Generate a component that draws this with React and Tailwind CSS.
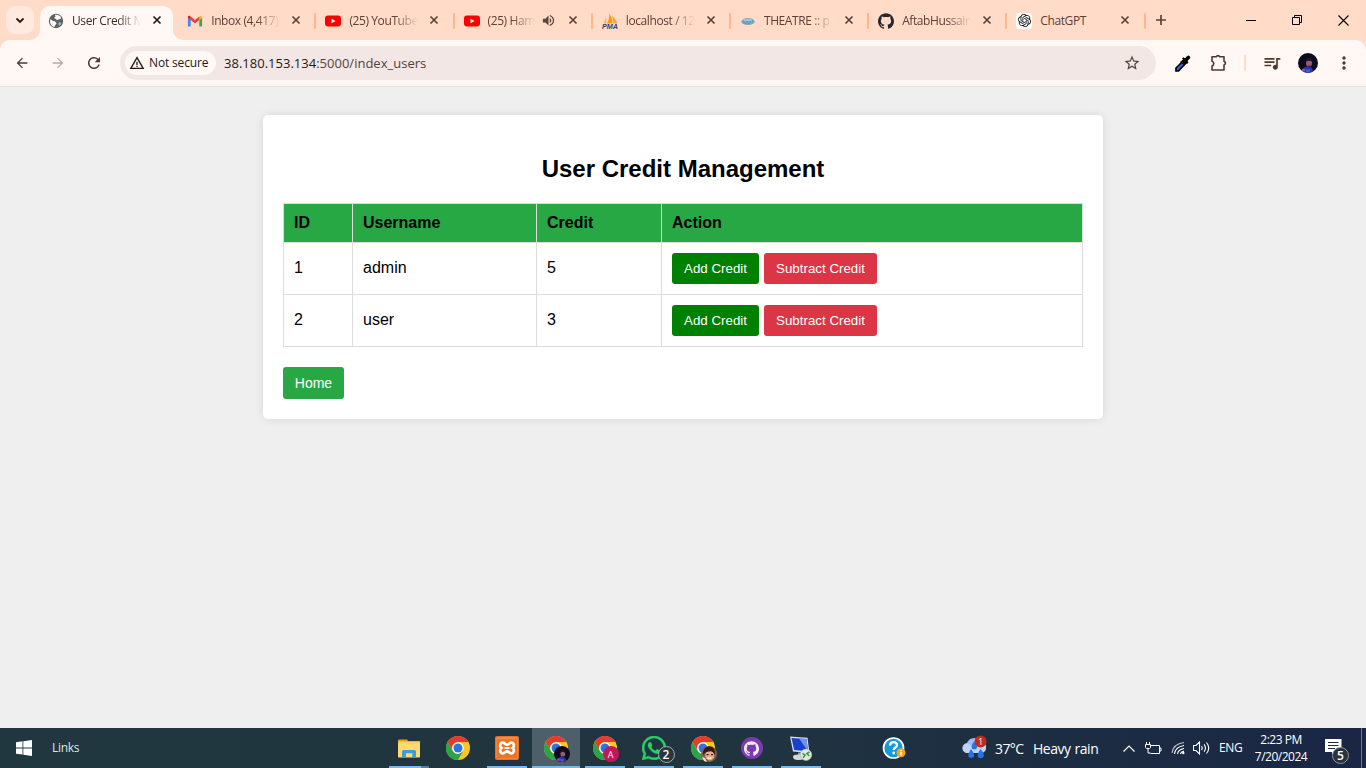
import React from "react";
import {
  MdArrowBack, MdArrowForward, MdRefresh, MdStarBorder, MdMoreVert,
  MdQueueMusic, MdVolumeUp, MdWarningAmber,
} from "react-icons/md";
import { SiGithub, SiOpenai, SiWhatsapp } from "react-icons/si";

const Globe = () => (
  <svg width="16" height="16" viewBox="0 0 16 16">
    <circle cx="8" cy="8" r="7.200" fill="#5b6266" />
    <path d="M2.200 6.200c1.600.6 2.300 1.800 3.900 1.900 1.100.1 1 1.200 1.900 1.300.9.2.4 1.800-.5 2.400-.8.5-.4 1.800-1.400 2.200C3.700 13.200 2 11 2 8.200z" fill="#fff8f5" />
    <path d="M7.200 1.800c2.200-.3 4.200.5 5.400 2 .8 1 .5 2-.6 2.200-1.300.2-1.600 1-3 .9-1.200-.1-1-1-2-1.300-1.300-.5-1-1.400.2-1.700.9-.2-.7-1.500 0-2.100z" fill="#fff8f5" />
    <path d="M11 9.500c1.200-.5 2.200-.2 2.400.6-.3 1.300-1.200 2.300-2.200 2.800-.7-.8-1.400-2.700-.2-3.400z" fill="#fff8f5" opacity=".5" />
  </svg>
);

const Gmail = () => (
  <svg width="16" height="16" viewBox="0 0 16 16">
    <path d="M1 13.500h2.700V7L.9 4.800v7.700c0 .6.000 1 .1 1z" fill="#4285f4" />
    <path d="M12.300 13.500H15c.1 0 .1-.4.1-1V4.800L12.300 7z" fill="#34a853" />
    <path d="M12.300 3.800V7l2.800-2.200c.1-2-1.200-2.500-2.300-1.600z" fill="#fbbc04" />
    <path d="M3.700 7V3.600L8 6.900l4.300-3.300V7L8 10.400z" fill="#ea4335" />
    <path d="M.9 4.800L3.700 7V3.600l-.5-.4C2.100 2.300.8 3 .9 4.800z" fill="#c5221f" />
  </svg>
);

const YouTube = () => (
  <svg width="16" height="16" viewBox="0 0 16 16">
    <rect x="0" y="2.400" width="16" height="11.200" rx="3" fill="#f00" />
    <path d="M6.500 5.700v4.600l4-2.300z" fill="#fff" />
  </svg>
);

const Pma = () => (
  <svg width="16" height="16" viewBox="0 0 16 16">
    <path d="M1.500 10.500C3 8.500 3.500 5.500 3.800 3.500c.6 2 .9 5 .4 7z" fill="#fbb25c" />
    <path d="M5 10.500c1.800-3 2.200-6.500 2.400-10 2 3 3.500 7 3 10z" fill="#f89c0e" />
    <path d="M11 10.500c.2-2.800-.3-5.500-1-8 2.400 2 4.500 5 5.500 8z" fill="#f9a63a" />
    <text x="0" y="15.600" fontSize="6.500" fontWeight="bold" fontStyle="italic" fontFamily="Liberation Sans, sans-serif" fill="#333c78" textLength="16" lengthAdjust="spacingAndGlyphs">PMA</text>
  </svg>
);

const Oval = () => (
  <svg width="16" height="16" viewBox="0 0 16 16">
    <ellipse cx="8" cy="8.500" rx="6.700" ry="3.600" fill="#7badc1" />
    <ellipse cx="7.500" cy="7" rx="4.500" ry="1.300" fill="#a4c4cf" />
    <path d="M3 8.800h10M4.500 10.600h6" stroke="#568da6" strokeWidth=".9" strokeDasharray="2 1" />
  </svg>
);

const Gpt = () => (
  <span className="flex size-4 items-center justify-center rounded-[3px] bg-white">
    <SiOpenai size={13} color="#111" />
  </span>
);

const CloseIcon = ({ color }) => (
  <svg className="ml-[9px] shrink-0" width="14" height="14" viewBox="0 0 14 14">
    <path d="M3.500 3.500l7 7M10.500 3.500l-7 7" stroke={color} strokeWidth="1.700" />
  </svg>
);

const Xampp = () => (
  <svg width="24" height="24" viewBox="0 0 24 24">
    <rect width="24" height="24" rx="2" fill="#e8702a" />
    <rect x="1.200" y="1" width="21.600" height="22" rx="1.500" fill="#f58a45" />
    <rect x="2" y="3.200" width="20" height="19" rx="1" fill="#ee7423" />
    <path d="M7.800 6.700c2 0 2.300 2 4.200 2s2.200-2 4.200-2c2.800 0 3.600 3.700 1.300 5.300 2.300 1.600 1.500 5.300-1.300 5.300-2 0-2.300-2-4.200-2s-2.200 2-4.200 2c-2.800 0-3.600-3.700-1.300-5.300-2.300-1.600-1.500-5.300 1.300-5.300z" fill="none" stroke="#fff" strokeWidth="2.700" />
    <path d="M9.500 12h5" stroke="#fff" strokeWidth="2" />
  </svg>
);

const Chrome = () => (
  <svg width="24" height="24" viewBox="0 0 24 24">
    <circle cx="12" cy="12" r="12" fill="#fcc624" />
    <path d="M1.600 6A12 12 0 0 1 22.400 6H12a6 6 0 0 0-5.300 8.600z" fill="#e33b2e" />
    <path d="M1.600 6l5.200 9A6 6 0 0 0 12 18l5.200-3L12 24A12 12 0 0 1 1.600 6z" fill="#2ba24c" />
    <circle cx="12" cy="12" r="5.800" fill="#fff" />
    <circle cx="12" cy="12" r="4.500" fill="#2a74e8" />
  </svg>
);

const Avatar = ({ size }) => (
  <svg width={size} height={size} viewBox="0 0 20 20">
    <defs><clipPath id={"av" + size}><circle cx="10" cy="10" r="10" /></clipPath></defs>
    <g clipPath={"url(#av" + size + ")"}>
      <rect width="20" height="20" fill="#0d0c1d" />
      <path d="M4.500 20c0-4.500 1.500-6.500 5-6.500 4 0 5.500 2 6 6.500z" fill="#2533ad" />
      <path d="M7.500 15.500c1 1.500 4 1.500 5 0l-1 4h-3z" fill="#5e55ce" />
      <ellipse cx="11" cy="10" rx="3" ry="3.800" fill="#9b5873" />
      <path d="M7.500 9c0-3 1.500-4 3.700-4 2.300 0 3.500 1.600 3.200 4-2-1.800-4.500-1.800-6.900 0z" fill="#1d1534" />
      <path d="M9.500 12.500h3.300l-1.500 2z" fill="#3a2246" />
      <circle cx="5.500" cy="17" r="1.600" fill="#8a58c0" />
    </g>
  </svg>
);

const Face = () => (
  <svg width="16" height="16" viewBox="0 0 16 16">
    <circle cx="8" cy="8" r="8" fill="#8a5a48" />
    <ellipse cx="8.800" cy="9.500" rx="4.500" ry="5" fill="#e3ad90" />
    <path d="M2.500 9C1 3 5 .5 8.500.5S15 3.500 13.500 9c-1-3-2.500-3.800-5-3.600C5.500 5.600 4 6 2.500 9z" fill="#2c1a18" />
    <path d="M5.500 8.700h2M10 8.700h2" stroke="#3a1f18" strokeWidth="1.200" />
    <path d="M6.500 11.500q2 1.800 4 0" stroke="#fff" strokeWidth="1.200" fill="none" />
    <path d="M1 11l3 1 2 4-3-1z" fill="#eee1d6" />
  </svg>
);

const Explorer = () => (
  <svg width="22" height="19" viewBox="0 0 22 19">
    <path d="M0 1.500Q0 .5 1 .5h8l1.500 2H22V5H0z" fill="#e2a211" />
    <rect y="2.600" width="22" height="15.900" rx=".8" fill="#fddb72" />
    <path d="M0 3.500h9l1.500-1H22v2H0z" fill="#fbd057" />
    <path d="M4 18.500v-6q0-1.600 1.600-1.600h11q1.400 0 1.400 1.600v6h-3.700v-4.200H8v4.200z" fill="#3d9be0" />
  </svg>
);

const RemoteDesktop = () => (
  <svg width="24" height="25" viewBox="0 0 24 25">
    <path d="M1 .5l17.500 1.200L20.500 17 4 15.500z" fill="#d7dde5" />
    <path d="M2.500 2l15 1L19 15.200 5.200 14z" fill="#1940c8" />
    <path d="M10 2.500l7.500.5L19 15.200z" fill="#6d94ee" />
    <path d="M9 16.500l5 .4.500 2.600-5-.2z" fill="#a7acb2" />
    <path d="M4 20.500q0-2 5-2t6 2.500-5 3-6-3.500z" fill="#d3d6da" />
    <circle cx="17" cy="18.800" r="5.700" fill="#e3e8e3" stroke="#b3b7b5" strokeWidth=".6" />
    <path d="M13.500 17.300l2.600 1.800-2 2.600M20.500 16l-2.600 1.500 2.300 2.600" stroke="#3a9a47" strokeWidth="1.500" fill="none" />
  </svg>
);

const GithubIcon = () => <SiGithub size={16} color="#24292f" />;

const tabs = [
  { title: "User Credit M", Icon: Globe, active: true },
  { title: "Inbox (4,417)", Icon: Gmail },
  { title: "(25) YouTube", Icon: YouTube },
  { title: "(25) Ham", Icon: YouTube, sound: true },
  { title: "localhost / 12", Icon: Pma },
  { title: "THEATRE :: p", Icon: Oval },
  { title: "AftabHussain", Icon: GithubIcon },
  { title: "ChatGPT", Icon: Gpt, whole: true },
];

function Tab({ title, Icon, active, sound, whole }) {
  return (
    <div className="relative flex h-[34px] w-[138.200px] shrink-0 items-center">
      {active && (
        <div className="absolute inset-y-0 left-0 w-[133px] rounded-t-[10px] bg-[#fff8f5]">
          <svg className="absolute bottom-0 -left-[10px]" width="10" height="10"><path d="M10 0v10H0A10 10 0 0 0 10 0z" fill="#fff8f5" /></svg>
          <svg className="absolute -right-[10px] bottom-0" width="10" height="10"><path d="M0 0v10h10A10 10 0 0 1 0 0z" fill="#fff8f5" /></svg>
        </div>
      )}
      <div className={"relative flex w-full items-center pb-[6px] " + (active ? "pl-[8px]" : "pl-[9px]")}>
        <div className="mt-[1px] w-6 shrink-0"><Icon /></div>
        <div className={(sound ? "w-[47px] " : "w-[69px] ") + "mt-[1px] shrink-0 overflow-hidden whitespace-nowrap text-[12px] leading-4 tracking-[-0.400px] " + (whole ? "" : "[mask-image:linear-gradient(to_right,black_calc(100%-24px),transparent)] ") + (active ? "text-[#3b2d28]" : "text-[#5d4037]")}>{title}</div>
        {sound && <MdVolumeUp size={15} className="ml-[6px] mr-[1px] shrink-0" color="#5a4338" />}
        <CloseIcon color={active ? "#231a17" : "#5a4338"} />
      </div>
      {!active && <div className="mb-[5px] h-4 w-[2px] shrink-0 rounded-full bg-[#ffb68c]" />}
    </div>
  );
}

function Browser() {
  return (
    <header className="shrink-0 bg-[#ffdbc8] font-['Open_Sans',sans-serif]">
      <div className="flex h-10 items-end">
        <div className="flex h-[34px] w-10 shrink-0 items-start pl-[6px]">
          <div className="flex size-7 items-center justify-center rounded-[9px] bg-[#ffeadf]">
            <svg width="10" height="10" viewBox="0 0 10 10"><path d="M1.500 3.500L5 7l3.500-3.500" fill="none" stroke="#231a17" strokeWidth="1.800" /></svg>
          </div>
        </div>
        {tabs.map((t, i) => <Tab key={i} {...t} />)}
        <div className="flex h-[34px] grow items-start pt-[6px]">
          <svg className="ml-[7px]" width="16" height="16" viewBox="0 0 16 16"><path d="M3 8h10M8 3v10" stroke="#5a4338" strokeWidth="1.700" /></svg>
          <div className="ml-auto flex h-4 items-center gap-[36px] pr-[17px]">
            <svg width="10" height="10"><path d="M0 5.500h10" stroke="#000" /></svg>
            <svg width="10" height="10" fill="none" stroke="#000"><path d="M.5 2.500h7v7h-7zM2.500 2V.5h7v7H8" /></svg>
            <svg width="11" height="11"><path d="M.5.5l10 10M10.500.5l-10 10" stroke="#000" strokeWidth="1.100" /></svg>
          </div>
        </div>
      </div>
      <div className="flex h-[47px] items-center rounded-t-[10px] border-b border-[#f3dcd3] bg-[#fff8f5]">
        <div className="flex w-[120px] shrink-0 items-center gap-[20px] pl-[14px]">
          <MdArrowBack size={16} color="#50392f" />
          <MdArrowForward size={16} color="#b9a9a2" />
          <MdRefresh size={18} className="-ml-[1px]" color="#50392f" />
        </div>
        <div className="flex h-[34px] w-[1036px] shrink-0 items-center rounded-full bg-[#f2e7e4] pl-[5px] pr-[15px]">
          <div className="flex h-6 w-[91px] items-center gap-[4px] rounded-full bg-[#fff8f5] pl-[4px]">
            <MdWarningAmber size={16} color="#231a17" />
            <span className="whitespace-nowrap text-[12px] tracking-[-0.150px] text-[#231a17]">Not secure</span>
          </div>
          <div className="mt-[1px] ml-2 grow whitespace-nowrap text-[13px] tracking-[0.010px]"><span className="text-[#231a17]">38.180.153.134</span><span className="text-[#52433d]">:5000/index_users</span></div>
          <MdStarBorder size={18} color="#50423c" />
        </div>
        <div className="flex grow items-center">
          <svg className="ml-[18px]" width="17" height="17" viewBox="0 0 17 17"><path d="M10 5L2 13v3h2.500L12 8z" fill="#405cd8" stroke="#000" strokeWidth="1.700" /><path d="M8 3.500l1.500-1.200 1.300 1.200L13 1.200q1.500-1.300 2.700 0t0 2.500L13.300 6l1.200 1.500L13 9z" fill="#000" /><path d="M6 7l5-4 3 3-4 4z" fill="#000" /></svg>
          <svg className="ml-[18px]" width="18" height="18" viewBox="0 0 18 18"><path d="M3 2.800h4.200a2 2 0 0 1 3.600 0H15v4.400a2 2 0 0 1 0 3.800v5H3v-4a2.500 2.500 0 0 0 0-4.800z" fill="none" stroke="#50392f" strokeWidth="1.600" strokeLinejoin="round" /></svg>
          <div className="ml-[17px] h-4 w-[2px] rounded-full bg-[#ffdbc8]" />
          <MdQueueMusic size={20} className="ml-[16px] mr-[1px]" color="#50392f" />
          <div className="ml-[15px]"><Avatar size={20} /></div>
          <MdMoreVert size={20} className="ml-[16px]" color="#50392f" />
        </div>
      </div>
    </header>
  );
}

function Page() {
  const cell = "border border-[#dddddd] px-[10px]";
  return (
    <main className="grow bg-[#efefef] pt-[28px] font-['Liberation_Sans',Arial,sans-serif] text-base text-black">
      <section className="mx-auto h-[304px] w-[840px] rounded-[5px] bg-white px-5 pt-[40px] shadow-[0_0_10px_rgba(0,0,0,0.1)]">
        <h2 className="mb-5 text-center text-2xl leading-7 font-bold">User Credit Management</h2>
        <table className="w-full table-fixed border-collapse text-left">
          <colgroup><col className="w-[69px]" /><col className="w-[184px]" /><col className="w-[125px]" /><col /></colgroup>
          <thead>
            <tr className="h-[39px] bg-[#28a745]">
              {["ID", "Username", "Credit", "Action"].map((h) => <th key={h} className={cell + " font-bold"}>{h}</th>)}
            </tr>
          </thead>
          <tbody>
            {[[1, "admin", 5], [2, "user", 3]].map((r) => (
              <tr key={r[0]} className="h-[52px]">
                {r.map((v, i) => <td key={i} className={cell + " pb-[2px]"}>{v}</td>)}
                <td className={cell}>
                  <div className="flex gap-[5px] text-[13.333px] leading-[15px] text-white">
                    <button className="h-[31px] w-[87px] rounded-[3px] bg-[#008000]">Add Credit</button>
                    <button className="h-[31px] w-[113px] rounded-[3px] bg-[#dc3545]">Subtract Credit</button>
                  </div>
                </td>
              </tr>
            ))}
          </tbody>
        </table>
        <a className="mt-5 flex h-8 w-[61px] items-center justify-center rounded-[3px] bg-[#28a745] text-sm text-white">Home</a>
      </section>
    </main>
  );
}

function TaskItem({ children, bar = true, active, stacked }) {
  return (
    <div className="flex h-10 w-[49px] flex-col items-center">
      <div className={"flex h-[38px] w-12 items-center justify-center pt-[2px] " + (active ? "bg-[#4d5f68]" : "")}>
        <div className="relative">{children}</div>
      </div>
      {bar && (
        <div className={"flex h-[2px] justify-end bg-[#76b9ed] " + (active ? "w-12" : "w-10")}>
          {stacked && <div className="h-[2px] w-[8px] bg-[#557f9e]" />}
        </div>
      )}
    </div>
  );
}

function Taskbar() {
  return (
    <footer className="flex h-10 shrink-0 items-center bg-linear-to-r from-[#20373f] via-[#20353f] to-[#1a2644] font-['Open_Sans',sans-serif] text-[12px] text-white">
      <div className="flex w-[384px] shrink-0 items-center pl-4">
        <svg width="16" height="16" viewBox="0 0 16 16" fill="#fff"><path d="M0 2.200l6.500-.9v6.200H0zM7.300 1.200L16 0v7.500H7.300zM0 8.400h6.500v6.200L0 13.800zM7.300 8.400H16V16l-8.700-1.200z" /></svg>
        <span className="ml-5 tracking-[-0.300px] text-[#dfe4e6]">Links</span>
      </div>
      <div className="flex w-[441px] shrink-0">
        <TaskItem stacked><Explorer /></TaskItem>
        <TaskItem bar={false}><Chrome /></TaskItem>
        <TaskItem><Xampp /></TaskItem>
        <TaskItem active><Chrome /><div className="absolute top-[10px] left-[10px]"><Avatar size={16} /></div></TaskItem>
        <TaskItem><Chrome /><div className="absolute top-[10px] left-[10px] flex size-4 items-center justify-center rounded-full bg-[#c2185b] text-[9px] leading-none">A</div></TaskItem>
        <TaskItem><SiWhatsapp size={24} stroke="#25d366" strokeWidth=".5" color="#25d366" /><div className="absolute top-[10px] left-[16px] flex size-[17px] items-center justify-center rounded-full border border-[#a4abae] bg-[#29363c] text-[12px] leading-none font-semibold">2</div></TaskItem>
        <TaskItem><Chrome /><div className="absolute top-[10px] left-[10px]"><Face /></div></TaskItem>
        <TaskItem><div className="flex size-[22px] items-center justify-center rounded-full bg-[#7b3ab0]"><SiGithub size={15} color="#f5eefa" /></div></TaskItem>
        <TaskItem><RemoteDesktop /></TaskItem>
      </div>
      <svg className="ml-[57px] shrink-0" width="24" height="24" viewBox="0 0 24 24">
        <circle cx="11.500" cy="12" r="10" fill="#139bd7" stroke="#fff" strokeWidth="1.700" />
        <path d="M8 9.500q.2-3.300 3.500-3.300t3.500 2.800c0 2.500-3.300 2.500-3.300 5" stroke="#fff" strokeWidth="2.300" fill="none" /><circle cx="11.700" cy="17" r="1.400" fill="#fff" />
        <circle cx="19" cy="16.800" r="4.500" fill="#f4a71d" /><path d="M19 15.700v3.800M19 13.700v1.200" stroke="#fff" strokeWidth="1.300" />
      </svg>
      <svg className="ml-[56px] shrink-0" width="26" height="26" viewBox="0 0 26 26">
        <path d="M5.500 18a5 5 0 0 1-.5-10A7.500 7.500 0 0 1 18 6a6.200 6.200 0 0 1 2 12z" fill="#9dbdf4" />
        <path d="M2 10q3-3 6 0t8-1 8 2a6 6 0 0 1-4 7H5.500A5 5 0 0 1 1 13z" fill="#c3d3f6" />
        <path d="M12 6.500q3 3.500 3 5.300a2.700 2.700 0 0 1-5.400 0q0-1.800 2.400-5.300zM9 14q3.200 4 3.200 7a3.200 3.200 0 0 1-6 0q0-3 2.800-7zM18.500 14q3.500 4 3.500 7a3.500 3.500 0 0 1-6.500 0q0-3 3-7z" fill="#2672e8" />
        <circle cx="18.500" cy="6.500" r="6" fill="#c42b1c" /><text x="18.500" y="9.800" fontSize="9" textAnchor="middle" fill="#fff">1</text>
      </svg>
      <span className="ml-[7px] w-[38px] shrink-0 text-[14px] tracking-[-0.600px]">37°C</span>
      <span className="shrink-0 whitespace-nowrap text-[14px] tracking-[-0.500px] [word-spacing:1px]">Heavy rain</span>
      <div className="ml-auto flex shrink-0 items-center">
        <svg width="12" height="7" viewBox="0 0 12 7"><path d="M.5 6.500L6 1l5.500 5.500" fill="none" stroke="#fff" strokeWidth="1.200" /></svg>
        <svg className="ml-[10px]" width="17" height="13" viewBox="0 0 17 13" fill="none" stroke="#fff"><path d="M6 3.500h8.500v8H5.500M14.500 6H16v3h-1.500M.5 2.500h5v3l-1 1h-3l-1-1zM1.500 0v2.500M4.500 0v2.500M3 6.500V11h2.500" /></svg>
        <svg className="ml-[9px]" width="15" height="14" viewBox="0 0 15 14" fill="none" stroke="#fff" strokeWidth="1.100"><g opacity=".7"><path d="M1 12Q2 3 13 1.500" /></g><path d="M3.500 13Q4 6 13 4.500M6.500 13Q7 8.500 13 7.500M9.500 13q.5-2.500 3.500-2.800" /><circle cx="12.300" cy="12" r="1.200" fill="#fff" stroke="none" /></svg>
        <svg className="ml-[7px]" width="17" height="14" viewBox="0 0 17 14" fill="none" stroke="#fff" strokeWidth="1.100"><path d="M.5 4.500H3L6.500 1v12L3 9.500H.5zM8.500 5q1.500 2 0 4M11 3.300q3 3.700 0 7.400M13.500 1.500q4.500 5.500 0 11" /></svg>
        <span className="ml-[9px] w-[24px] tracking-[-0.400px]">ENG</span>
        <div className="-mt-[1px] ml-[8px] w-[60px] text-center text-[12px] leading-[17px] tracking-[-0.500px]"><div>2:23 PM</div><div>7/20/2024</div></div>
        <div className="relative ml-[14px] h-6 w-[26px]">
          <svg width="17" height="18" viewBox="0 0 17 18"><path d="M0 3h16.500v13H10l-3 2.500V16H0z" fill="#fff" /><path d="M3 6.500h10.500M3 9.500h10.500M3 12.500h7" stroke="#1d2b44" /></svg>
          <div className="absolute top-[11px] left-[7px] flex size-[17px] items-center justify-center rounded-full border border-[#8d949e] bg-[#2c323b] text-[12px] leading-none font-semibold">5</div>
        </div>
        <div className="mr-1 ml-[10px] h-10 w-px bg-[#69758a]" />
      </div>
    </footer>
  );
}

export default function App() {
  return (
    <div className="flex h-[768px] w-[1366px] flex-col overflow-hidden">
      <Browser />
      <Page />
      <Taskbar />
    </div>
  );
}
